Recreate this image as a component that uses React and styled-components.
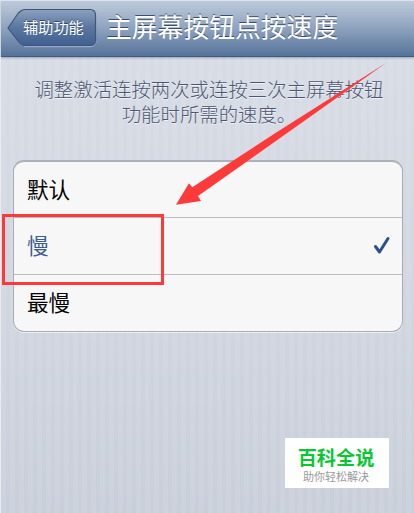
import React from 'react';
import styled, { createGlobalStyle } from 'styled-components'

const GlobalStyle = createGlobalStyle`
  * {
    box-sizing: border-box;
  }
  body {
    margin: 0;
    overflow: hidden;
    font-family: "Noto Sans CJK SC", sans-serif;
  }
`

const Screen = styled.div`
  position: relative;
  width: 414px;
  height: 513px;
  border-left: 1px solid #e8ecf2;
  background:
    repeating-linear-gradient(90deg, rgba(255, 255, 255, 0.07) 0 5px, transparent 5px 9px),
    linear-gradient(#d8dde6, #d2d7e1 50%, #c9cfda);
`

const NavBar = styled.header`
  display: flex;
  align-items: flex-start;
  height: 57px;
  border-top: 1px solid #dce3ec;
  border-bottom: 1px solid #3d5a84;
  background: linear-gradient(#bdcadb, #8fa4c0 48%, #577399);
  box-shadow: 0 1px 2px rgba(60, 70, 90, 0.4);
`

const BackButton = styled.button`
  display: grid;
  width: 90px;
  height: 40px;
  margin: 7px 0 0 6px;
  padding: 0;
  border: 0;
  background: none;
  font-family: inherit;

  > * {
    grid-area: 1 / 1;
  }
`

const BackLabel = styled.span`
  padding-left: 16px;
  color: #fff;
  font-size: 15.2px;
  line-height: 37px;
  text-align: left;
  white-space: nowrap;
  text-shadow: 0 -1px 0 rgba(40, 55, 85, 0.75);
`

const Title = styled.h1`
  margin: 0 0 0 9px;
  color: #fff;
  font-size: 25.8px;
  font-weight: 400;
  line-height: 50px;
  white-space: nowrap;
  text-shadow: 0 -1px 0 rgba(45, 60, 85, 0.85);
`

const Description = styled.p`
  margin: 0;
  padding: 20px 0 34px 3px;
  color: #4c5671;
  font-size: 19.4px;
  font-weight: 300;
  line-height: 24.5px;
  text-align: center;
  white-space: nowrap;
  text-shadow: 0 1px 0 #eef1f6;
`

const OptionList = styled.ul`
  width: 390px;
  height: 172px;
  margin: 0 0 0 12px;
  padding: 0;
  list-style: none;
  border: 1px solid #a7acb5;
  border-top: 2px solid #adb1b9;
  border-radius: 11px;
  background: #f7f7f7;
  box-shadow: 0 1px 0 rgba(255, 255, 255, 0.6);
`

const Option = styled.li`
  display: flex;
  align-items: flex-start;
  justify-content: space-between;
  height: 57px;
  padding: 0 11px 0 13px;
  color: ${({ $selected }) => ($selected ? '#3d5b94' : '#000')};
  font-size: 21.6px;
  line-height: 54px;

  &:not(:last-child) {
    border-bottom: 1px solid #bcbcbe;
  }
  &:first-child {
    height: 56px;
  }
`

const Highlight = styled.div`
  position: absolute;
  left: 1px;
  top: 214px;
  width: 162px;
  height: 71px;
  border: 3px solid #fc3a3a;
`

const Arrow = styled.svg`
  position: absolute;
  left: -1px;
  top: 0;
  pointer-events: none;
`

const Watermark = styled.div`
  position: absolute;
  left: 284px;
  top: 438px;
  width: 104px;
  height: 50px;
  padding: 6px 2px 0 0;
  background: #fff;
  text-align: center;
  white-space: nowrap;
`

const Brand = styled.div`
  color: #08c832;
  font-size: 19.2px;
  font-weight: 700;
  line-height: 27px;
`

const Slogan = styled.div`
  color: #999;
  font-size: 11px;
  line-height: 10px;
`

const CheckIcon = styled.svg`
  margin-top: 18px;
`

const opcoes = [
  { id: 'default', label: '默认' },
  { id: 'slow', label: '慢' },
  { id: 'slowest', label: '最慢' },
];

function BackShape() {
  return (
    <svg width="90" height="40" viewBox="0 0 90 40" fill="none">
      <defs>
        <linearGradient id="back" x1="0" y1="0" x2="0" y2="1">
          <stop offset="0" stopColor="#8ba0be" />
          <stop offset="0.5" stopColor="#59779f" />
          <stop offset="1" stopColor="#416092" />
        </linearGradient>
        <linearGradient id="backEdge" x1="0" y1="0" x2="0" y2="1">
          <stop offset="0" stopColor="#46536b" />
          <stop offset="1" stopColor="#3c5784" />
        </linearGradient>
      </defs>
      <path d="M17 38.7H83Q88.5 38.7 89 33" stroke="#a1b1c9" strokeWidth="1" />
      <path
        d="M1 20L11 5.5Q14.5 1.5 18 1.5H83Q88.5 1.5 88.5 7V32Q88.5 37.5 83 37.5H18Q14.5 37.5 11 33Z"
        fill="url(#back)"
        stroke="url(#backEdge)"
        strokeWidth="1.2"
      />
    </svg>
  )
}

function Check() {
  return (
    <CheckIcon width="18" height="20" viewBox="0 0 18 20" fill="none">
      <path d="M2.5 10.5L6.5 16L15 2.5" stroke="#2e5088" strokeWidth="3" strokeLinecap="round" strokeLinejoin="round" />
    </CheckIcon>
  )
}

export default function App() {
  const [selected, setSelected] = React.useState('slow');

  return (
    <>
      <GlobalStyle />
      <Screen>
        <NavBar>
          <BackButton>
            <BackShape />
            <BackLabel>辅助功能</BackLabel>
          </BackButton>
          <Title>主屏幕按钮点按速度</Title>
        </NavBar>
        <Description>
          调整激活连按两次或连按三次主屏幕按钮<br />
          功能时所需的速度。
        </Description>
        <OptionList>
          {opcoes.map((item) => (
            <Option key={item.id} $selected={item.id === selected} onClick={() => setSelected(item.id)}>
              {item.label}
              {item.id === selected && <Check />}
            </Option>
          ))}
        </OptionList>
        <Highlight />
        <Arrow width="414" height="513" viewBox="0 0 414 513">
          <path d="M386 63L277 132L192.3 187.3L189 183.3L176 204.8L201 201L198 196L242 165L290 131Z" fill="#fc3a3a" />
        </Arrow>
        <Watermark>
          <Brand>百科全说</Brand>
          <Slogan>助你轻松解决</Slogan>
        </Watermark>
      </Screen>
    </>
  );
}
